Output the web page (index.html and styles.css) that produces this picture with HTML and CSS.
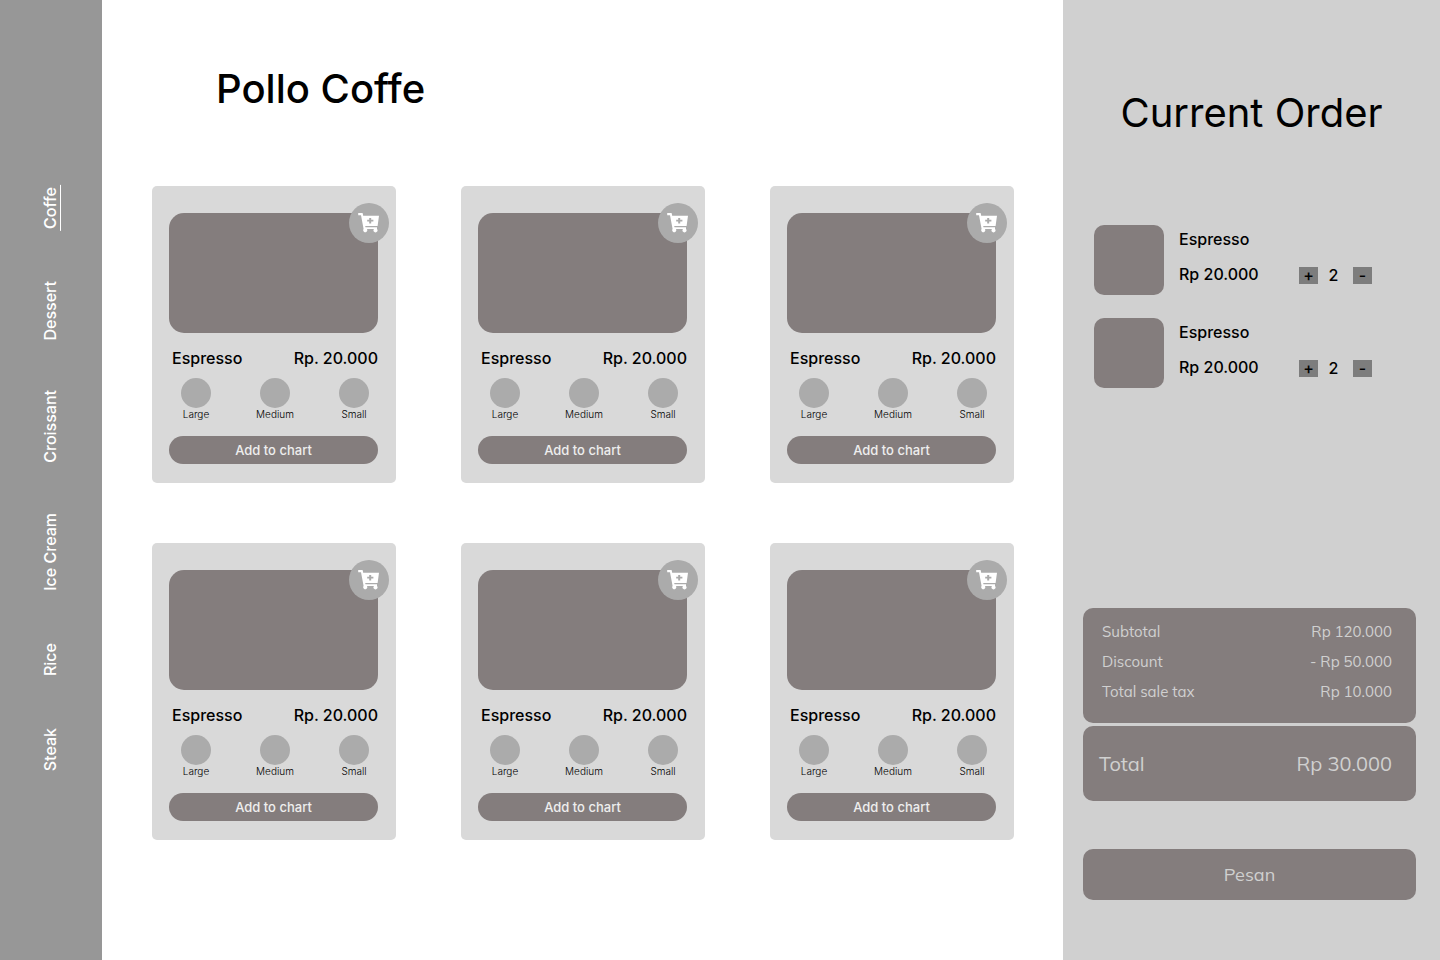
FILE: index.html
```
<!DOCTYPE html>
<html lang="en">
<head>
<meta charset="utf-8">
<meta name="viewport" content="width=device-width, initial-scale=1">
<title>Pollo Coffe</title>
<link rel="stylesheet" href="styles.css">
</head>
<body>
<div class="app">
  <nav class="sidebar" aria-label="Categories">
    <a class="nav-link nav-link-active" href="#coffe" aria-current="page">Coffe</a>
    <a class="nav-link" href="#dessert">Dessert</a>
    <a class="nav-link" href="#croissant">Croissant</a>
    <a class="nav-link" href="#ice-cream">Ice Cream</a>
    <a class="nav-link" href="#rice">Rice</a>
    <a class="nav-link" href="#steak">Steak</a>
  </nav>

  <main class="menu">
    <h1 class="menu-title">Pollo Coffe</h1>
    <div class="menu-grid" id="menu-grid"></div>
  </main>

  <aside class="order">
    <h2 class="order-title">Current Order</h2>
    <ul class="order-list">
      <li class="order-item">
        <div class="order-photo"></div>
        <div class="order-text">
          <span>Espresso</span>
          <span>Rp 20.000</span>
        </div>
        <div class="quantity">
          <button class="quantity-button" type="button" aria-label="Add one">+</button>
          <span class="quantity-value">2</span>
          <button class="quantity-button" type="button" aria-label="Remove one">-</button>
        </div>
      </li>
      <li class="order-item">
        <div class="order-photo"></div>
        <div class="order-text">
          <span>Espresso</span>
          <span>Rp 20.000</span>
        </div>
        <div class="quantity">
          <button class="quantity-button" type="button" aria-label="Add one">+</button>
          <span class="quantity-value">2</span>
          <button class="quantity-button" type="button" aria-label="Remove one">-</button>
        </div>
      </li>
    </ul>
    <div class="checkout">
      <dl class="summary">
        <div class="summary-row"><dt>Subtotal</dt><dd>Rp 120.000</dd></div>
        <div class="summary-row"><dt>Discount</dt><dd>- Rp 50.000</dd></div>
        <div class="summary-row"><dt>Total sale tax</dt><dd>Rp 10.000</dd></div>
      </dl>
      <dl class="total">
        <dt>Total</dt><dd>Rp 30.000</dd>
      </dl>
      <button class="submit" type="button">Pesan</button>
    </div>
  </aside>
</div>

<template id="product-template">
  <article class="card">
    <div class="card-photo"></div>
    <button class="cart-button" type="button" aria-label="Add to cart">
      <svg class="cart-icon" viewBox="0 0 22 20" aria-hidden="true">
        <path fill="currentColor" fill-rule="evenodd" d="M0.2 0H4.6L5.2 2.7H21L19.6 12.9H7.2L7.5 14.2H19V16.1A2 2 0 1 1 16 16.1H8.9A2 2 0 1 1 5.6 16.1L3 2.2H0.2ZM11.2 4.9V6.8H9.2V8.6H11.2V10.5H13.2V8.6H15.4V6.8H13.2V4.9Z"/>
      </svg>
    </button>
    <div class="card-heading">
      <h3 class="card-name">Espresso</h3>
      <span>Rp. 20.000</span>
    </div>
    <div class="sizes" role="radiogroup" aria-label="Size">
      <label class="size"><input class="size-input" type="radio" value="large">Large</label>
      <label class="size"><input class="size-input" type="radio" value="medium">Medium</label>
      <label class="size"><input class="size-input" type="radio" value="small">Small</label>
    </div>
    <button class="add-button" type="button">Add to chart</button>
  </article>
</template>
<script src="script.js"></script>
</body>
</html>
```

FILE: styles.css
```
* {
  box-sizing: border-box;
}

body {
  margin: 0;
  background: #fff;
  color: #000;
  font-family: Inter, "Liberation Sans", sans-serif;
  font-size: 16px;
  font-weight: 500;
  line-height: 20px;
}

h1, h2, h3, ul, dl, dd {
  margin: 0;
  padding: 0;
}

button {
  margin: 0;
  padding: 0;
  border: 0;
  font: inherit;
  color: inherit;
  cursor: pointer;
}

.app {
  display: grid;
  grid-template-columns: 102px minmax(0, 1fr) 377px;
  min-height: 100vh;
}

/* Category navigation */
.sidebar {
  display: flex;
  flex-direction: column;
  align-items: center;
  gap: 50px;
  padding: 185px 2px 0 0;
  background: #979797;
}

.nav-link {
  writing-mode: vertical-rl;
  transform: rotate(180deg);
  color: #fff;
  line-height: 20px;
  text-decoration: none;
}

.nav-link:nth-child(n + 5) {
  margin-top: 2px;
}

.nav-link-active {
  padding: 2px 0;
  border-left: 1px solid #fff;
}

/* Product menu */
.menu {
  padding: 65px 49px 64px 50px;
}

.menu-title {
  padding-left: 64px;
  font-size: 40px;
  font-weight: 500;
  line-height: 48px;
}

.menu-grid {
  display: grid;
  grid-template-columns: repeat(3, minmax(0, 1fr));
  gap: 60px 65px;
  margin-top: 73px;
}

.card {
  position: relative;
  display: flex;
  flex-direction: column;
  padding: 27px 18px 19px 17px;
  border-radius: 5px;
  background: #d9d9d9;
}

.card-photo {
  height: 120px;
  border-radius: 15px;
  background: #847d7d;
}

.cart-button {
  position: absolute;
  top: 17px;
  right: 7px;
  display: grid;
  place-items: center;
  width: 40px;
  height: 40px;
  border-radius: 50%;
  background: #ababab;
  color: #fff;
}

.cart-icon {
  width: 22px;
  height: 20px;
}

.card-heading {
  display: flex;
  justify-content: space-between;
  margin-top: 15px;
  padding-left: 3px;
}

.card-name {
  font-size: 16px;
  font-weight: 500;
}

.sizes {
  display: flex;
  justify-content: space-between;
  margin-top: 10px;
  padding: 0 9px 0 12px;
}

.size {
  display: flex;
  flex-direction: column;
  align-items: center;
  font-size: 10px;
  font-weight: 300;
  line-height: 12px;
}

.size-input {
  appearance: none;
  width: 30px;
  height: 30px;
  margin: 0;
  border-radius: 50%;
  background: #ababab;
}

.size-input:checked {
  background: #847d7d;
}

.add-button {
  height: 28px;
  margin-top: 16px;
  border-radius: 14px;
  background: #847d7d;
  color: #eee;
  font-size: 13px;
}

/* Current order */
.order {
  display: flex;
  flex-direction: column;
  padding: 89px 24px 60px 20px;
  background: #d0d0d0;
}

.order-title {
  padding-left: 4px;
  font-size: 40px;
  font-weight: 400;
  line-height: 48px;
  text-align: center;
}

.order-list {
  display: flex;
  flex-direction: column;
  gap: 23px;
  margin-top: 88px;
  padding: 0 44px 0 11px;
  list-style: none;
}

.order-item {
  display: flex;
  gap: 15px;
}

.order-photo {
  width: 70px;
  height: 70px;
  border-radius: 10px;
  background: #847d7d;
}

.order-text {
  display: flex;
  flex-direction: column;
  gap: 15px;
  padding-top: 4px;
}

.quantity {
  display: grid;
  grid-template-columns: 19px 35px 19px;
  align-self: flex-start;
  align-items: center;
  margin-top: 40px;
  margin-left: auto;
  text-align: center;
}

.quantity-value {
  padding-right: 4px;
}

.quantity-button {
  height: 17px;
  background: #7d7d7d;
  line-height: 17px;
}

.checkout {
  display: flex;
  flex-direction: column;
  margin-top: auto;
  color: #d0d0d0;
  font-family: Mulish, Muli, Lato, sans-serif;
  font-weight: 400;
}

.summary {
  display: flex;
  flex-direction: column;
  gap: 10px;
  padding: 14px 24px 21px 19px;
  border-radius: 10px;
  background: #847d7d;
  font-size: 15px;
}

.summary-row {
  display: flex;
  justify-content: space-between;
}

.total {
  display: flex;
  align-items: center;
  justify-content: space-between;
  min-height: 75px;
  margin-top: 3px;
  padding: 0 24px 0 16px;
  border-radius: 10px;
  background: #847d7d;
  font-size: 20px;
}

.submit {
  height: 51px;
  margin-top: 48px;
  border-radius: 10px;
  background: #847d7d;
  font-size: 18px;
}
```

FILE: script.js
```
const grid = document.getElementById("menu-grid");
const template = document.getElementById("product-template");

for (let i = 1; i <= 6; i += 1) {
  const card = template.content.cloneNode(true);
  card.querySelectorAll(".size-input").forEach((input) => {
    input.name = `size-${i}`;
  });
  grid.append(card);
}
```
